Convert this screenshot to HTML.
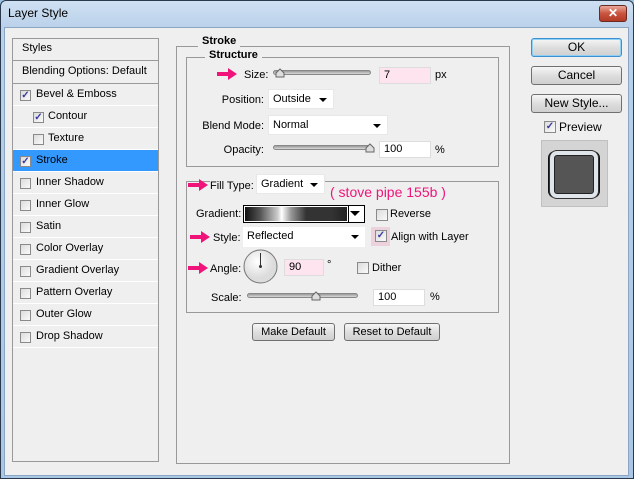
<!DOCTYPE html>
<html><head><meta charset="utf-8"><style>
*{margin:0;padding:0;box-sizing:border-box}
body{width:634px;height:479px;overflow:hidden;font-family:"Liberation Sans",sans-serif;font-size:11px;color:#000;background:#9cc3e6;position:relative}
.a{position:absolute}
.win{left:0;top:0;width:634px;height:479px;border:1px solid #2a3a4c;border-radius:6px 6px 0 0;background:linear-gradient(#cfe0f2,#b9d1ea 28px,#a9c6e4);}
.body{left:4px;top:27px;width:625px;height:449px;background:#efefef;border:1px solid #8aa6c4}
.title{left:8px;top:6px;font-size:12px;color:#000}
.close{left:599px;top:5px;width:28px;height:17px;border:1px solid #6b2a20;border-radius:3px;background:linear-gradient(#e8a89a,#c9543f 50%,#b23a26);color:#fff;font-weight:bold;font-size:12px;text-align:center;line-height:15px}
.box{border:1px solid #999}
.row{left:13px;width:145px;height:22px;border-bottom:1px solid #fff;padding-left:23px;line-height:21px}
.row.sub{padding-left:35px}
.cb{position:absolute;width:11px;height:11px;border:1px solid #8a8a8a;background:linear-gradient(135deg,#dcdcdc,#fafafa);font-size:10px;line-height:9px;text-align:center;color:#3a3aa0;font-weight:bold}
.sel{background:#3399ff}
.lbl{font-weight:bold}
.inp{background:#fff;border:1px solid #ddd;height:17px;line-height:15px;padding-left:4px}
.pink{background:#fde4ee}
.dd{background:#fff;height:20px;line-height:19px;padding-left:4px;border:1px solid #e8e8e8}
.arr{position:absolute;right:6px;top:8px;width:0;height:0;border-left:4px solid transparent;border-right:4px solid transparent;border-top:4px solid #000}
.track{height:5px;border-radius:3px;background:linear-gradient(#9a9a9a,#d8d8d8);border:1px solid #888}
.btn{border:1px solid #707070;border-radius:3px;background:linear-gradient(#f6f6f6,#dedede 50%,#cfcfcf);text-align:center;font-size:12px}
.parr{width:20px;height:12px}
.r{text-align:right}
</style></head><body>
<div class="a win"></div>
<div class="a title">Layer Style</div>
<div class="a close">✕</div>
<div class="a body"></div>

<div class="a box" style="left:12px;top:38px;width:147px;height:424px"></div>
<div class="a row" style="top:38px;padding-left:9px;height:23px;border-bottom:1px solid #999">Styles</div>
<div class="a row" style="top:61px;padding-left:9px;height:23px;border-bottom:1px solid #999">Blending Options: Default</div>
<div class="a row" style="top:84px">Bevel &amp; Emboss</div>
<div class="a row sub" style="top:106px">Contour</div>
<div class="a row sub" style="top:128px">Texture</div>
<div class="a row sel" style="top:150px">Stroke</div>
<div class="a row" style="top:172px">Inner Shadow</div>
<div class="a row" style="top:194px">Inner Glow</div>
<div class="a row" style="top:216px">Satin</div>
<div class="a row" style="top:238px">Color Overlay</div>
<div class="a row" style="top:260px">Gradient Overlay</div>
<div class="a row" style="top:282px">Pattern Overlay</div>
<div class="a row" style="top:304px">Outer Glow</div>
<div class="a row" style="top:326px">Drop Shadow</div>
<div class="cb" style="left:20px;top:90px">✓</div>
<div class="cb" style="left:33px;top:112px">✓</div>
<div class="cb" style="left:33px;top:134px"></div>
<div class="cb" style="left:20px;top:156px">✓</div>
<div class="cb" style="left:20px;top:178px"></div>
<div class="cb" style="left:20px;top:200px"></div>
<div class="cb" style="left:20px;top:222px"></div>
<div class="cb" style="left:20px;top:244px"></div>
<div class="cb" style="left:20px;top:266px"></div>
<div class="cb" style="left:20px;top:288px"></div>
<div class="cb" style="left:20px;top:310px"></div>
<div class="cb" style="left:20px;top:332px"></div>

<div class="a box" style="left:176px;top:46px;width:334px;height:418px"></div>
<div class="a lbl" style="left:198px;top:35px;background:#efefef;padding:0 4px">Stroke</div>
<div class="a box" style="left:186px;top:57px;width:313px;height:110px"></div>
<div class="a lbl" style="left:205px;top:49px;background:#efefef;padding:0 4px">Structure</div>

<svg class="a parr" style="left:217px;top:68px" viewBox="0 0 20 12"><path d="M0 4h11V0l9 6-9 6V8H0z" fill="#f0147a"/></svg>
<div class="a" style="left:244px;top:69px">Size:</div>
<div class="a track" style="left:273px;top:70px;width:98px"></div>
<svg class="a" style="left:275px;top:68px" width="10" height="10"><path d="M1 9V5l4-4 4 4v4z" fill="#ddd" stroke="#666"/></svg>
<div class="a inp pink" style="left:379px;top:67px;width:52px">7</div>
<div class="a" style="left:435px;top:69px">px</div>

<div class="a r" style="left:190px;top:94px;width:74px">Position:</div>
<div class="a dd" style="left:268px;top:89px;width:66px">Outside<span class="arr"></span></div>
<div class="a r" style="left:190px;top:120px;width:74px">Blend Mode:</div>
<div class="a dd" style="left:268px;top:115px;width:120px">Normal<span class="arr"></span></div>
<div class="a r" style="left:190px;top:144px;width:74px">Opacity:</div>
<div class="a track" style="left:273px;top:145px;width:98px"></div>
<svg class="a" style="left:365px;top:143px" width="10" height="10"><path d="M1 9V5l4-4 4 4v4z" fill="#ddd" stroke="#666"/></svg>
<div class="a inp" style="left:379px;top:141px;width:52px">100</div>
<div class="a" style="left:435px;top:144px">%</div>

<div class="a box" style="left:186px;top:181px;width:313px;height:132px"></div>
<svg class="a parr" style="left:188px;top:179px" viewBox="0 0 20 12"><path d="M0 4h11V0l9 6-9 6V8H0z" fill="#f0147a"/></svg>
<div class="a" style="left:210px;top:180px;background:#efefef;padding-right:3px">Fill Type:</div>
<div class="a dd pink" style="left:256px;top:174px;width:69px">Gradient<span class="arr"></span></div>
<div class="a" style="left:330px;top:184px;color:#f0147a;font-size:14px">( stove pipe 155b )</div>

<div class="a" style="left:196px;top:208px">Gradient:</div>
<div class="a" style="left:243px;top:205px;width:122px;height:18px;border:1px solid #000;background:#fff"></div>
<div class="a" style="left:245px;top:207px;width:102px;height:14px;background:linear-gradient(90deg,#111,#555 15%,#ccc 32%,#fff 36%,#999 45%,#333 60%,#333 85%,#222)"></div>
<div class="a" style="left:348px;top:206px;width:1px;height:16px;background:#000"></div>
<span class="a arr" style="left:350px;top:211px;border-left-width:5px;border-right-width:5px;border-top-width:5px"></span>
<div class="cb" style="left:376px;top:209px;width:12px;height:12px"></div>
<div class="a" style="left:390px;top:208px">Reverse</div>

<svg class="a parr" style="left:190px;top:231px" viewBox="0 0 20 12"><path d="M0 4h11V0l9 6-9 6V8H0z" fill="#f0147a"/></svg>
<div class="a" style="left:213px;top:232px">Style:</div>
<div class="a dd pink" style="left:243px;top:227px;width:122px;border:none">Reflected<span class="arr"></span></div>
<div class="a" style="left:371px;top:227px;width:19px;height:19px;background:#ecd2dd"></div>
<div class="cb" style="left:375px;top:230px;width:12px;height:12px">✓</div>
<div class="a" style="left:391px;top:231px">Align with Layer</div>

<svg class="a parr" style="left:188px;top:262px" viewBox="0 0 20 12"><path d="M0 4h11V0l9 6-9 6V8H0z" fill="#f0147a"/></svg>
<div class="a" style="left:210px;top:263px">Angle:</div>
<svg class="a" style="left:243px;top:249px" width="36" height="36"><defs><radialGradient id="g" cx=".4" cy=".35"><stop offset="0" stop-color="#fff"/><stop offset="1" stop-color="#dcdcdc"/></radialGradient></defs><circle cx="17.5" cy="17.5" r="16.5" fill="url(#g)" stroke="#777"/><path d="M17.5 4v13" stroke="#333"/><circle cx="17.5" cy="17.5" r="1.5" fill="#333"/></svg>
<div class="a inp pink" style="left:284px;top:259px;width:40px">90</div>
<div class="a" style="left:327px;top:259px">°</div>
<div class="cb" style="left:357px;top:262px;width:12px;height:12px"></div>
<div class="a" style="left:372px;top:262px">Dither</div>

<div class="a" style="left:211px;top:292px">Scale:</div>
<div class="a track" style="left:247px;top:293px;width:111px"></div>
<svg class="a" style="left:311px;top:291px" width="10" height="10"><path d="M1 9V5l4-4 4 4v4z" fill="#ddd" stroke="#666"/></svg>
<div class="a inp" style="left:373px;top:289px;width:52px">100</div>
<div class="a" style="left:430px;top:291px">%</div>

<div class="a btn" style="left:252px;top:323px;width:83px;height:18px;line-height:16px;font-size:11px">Make Default</div>
<div class="a btn" style="left:344px;top:323px;width:96px;height:18px;line-height:16px;font-size:11px">Reset to Default</div>

<div class="a btn" style="left:531px;top:38px;width:91px;height:19px;line-height:17px;border-color:#3c8fd0;box-shadow:inset 0 0 0 1px #8fd0f5">OK</div>
<div class="a btn" style="left:531px;top:66px;width:91px;height:19px;line-height:17px">Cancel</div>
<div class="a btn" style="left:531px;top:94px;width:91px;height:19px;line-height:17px">New Style...</div>
<div class="cb" style="left:544px;top:121px;width:12px;height:12px">✓</div>
<div class="a" style="left:559px;top:120px;font-size:12px">Preview</div>
<div class="a" style="left:541px;top:140px;width:67px;height:67px;background:#d4d4d4;border:1px solid #c0c0c0"></div>
<div class="a" style="left:550px;top:151px;width:48px;height:47px;border-radius:7px;border:4px solid #dfe5ea;background:#555;box-shadow:0 0 0 1px #333,inset 0 0 0 1px #222,-2px 0 0 #111,2px 0 0 #111"></div>
</body></html>
